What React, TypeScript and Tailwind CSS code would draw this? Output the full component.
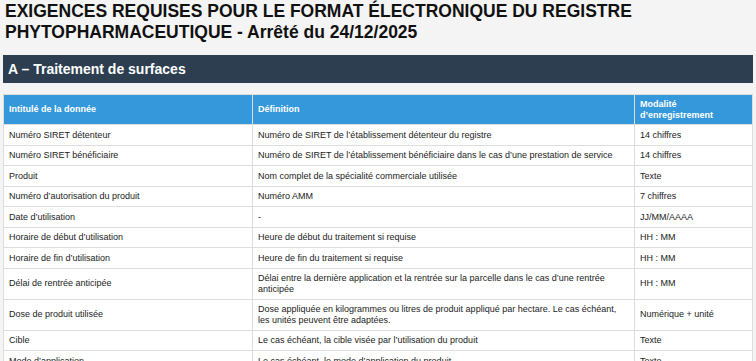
import React from 'react';

type Row = { label: string; definition: string; mode: string };

const rows: Row[] = [
  { label: 'Numéro SIRET détenteur', definition: "Numéro de SIRET de l’établissement détenteur du registre", mode: '14 chiffres' },
  { label: 'Numéro SIRET bénéficiaire', definition: "Numéro de SIRET de l’établissement bénéficiaire dans le cas d’une prestation de service", mode: '14 chiffres' },
  { label: 'Produit', definition: 'Nom complet de la spécialité commerciale utilisée', mode: 'Texte' },
  { label: 'Numéro d’autorisation du produit', definition: 'Numéro AMM', mode: '7 chiffres' },
  { label: 'Date d’utilisation', definition: '-', mode: 'JJ/MM/AAAA' },
  { label: 'Horaire de début d’utilisation', definition: 'Heure de début du traitement si requise', mode: 'HH : MM' },
  { label: 'Horaire de fin d’utilisation', definition: 'Heure de fin du traitement si requise', mode: 'HH : MM' },
  { label: 'Délai de rentrée anticipée', definition: 'Délai entre la dernière application et la rentrée sur la parcelle dans le cas d’une rentrée anticipée', mode: 'HH : MM' },
  { label: 'Dose de produit utilisée', definition: 'Dose appliquée en kilogrammes ou litres de produit appliqué par hectare. Le cas échéant, les unités peuvent être adaptées.', mode: 'Numérique + unité' },
  { label: 'Cible', definition: 'Le cas échéant, la cible visée par l’utilisation du produit', mode: 'Texte' },
  { label: 'Mode d’application', definition: 'Le cas échéant, le mode d’application du produit', mode: 'Texte' },
];

export default function App() {
  return (
    <div className="min-h-screen bg-[#f4f4f4] text-[#222] font-['Liberation_Sans',Arial,sans-serif] px-[3px] pt-[1px]">
      <h1 className="px-[2px] text-[17.5px] leading-[21px] font-bold text-[#111]">
        EXIGENCES REQUISES POUR LE FORMAT ÉLECTRONIQUE DU REGISTRE PHYTOPHARMACEUTIQUE - Arrêté du 24/12/2025
      </h1>

      <div className="mt-[12px] h-[28px] flex items-center bg-[#2c3e50] px-[5px] text-[14px] font-bold text-white">
        A – Traitement de surfaces
      </div>

      <table className="mt-[11px] w-[750px] border-collapse bg-white text-[9px] leading-[10.5px]">
        <thead>
          <tr className="bg-[#3498db] text-white font-bold">
            <th className="w-[249px] border border-[#ddd] px-[5px] py-[4px] text-left font-bold">Intitulé de la donnée</th>
            <th className="w-[382px] border border-[#ddd] px-[5px] py-[4px] text-left font-bold">Définition</th>
            <th className="border border-[#ddd] px-[5px] py-[4px] text-left font-bold">
              Modalité
              <br />
              d’enregistrement
            </th>
          </tr>
        </thead>
        <tbody>
          {rows.map((r) => (
            <tr key={r.label}>
              <td className="border border-[#ddd] px-[5px] py-[4.5px] align-middle">{r.label}</td>
              <td className="border border-[#ddd] px-[5px] py-[4.5px] align-middle">{r.definition}</td>
              <td className="border border-[#ddd] px-[5px] py-[4.5px] align-middle">{r.mode}</td>
            </tr>
          ))}
        </tbody>
      </table>
    </div>
  );
}
